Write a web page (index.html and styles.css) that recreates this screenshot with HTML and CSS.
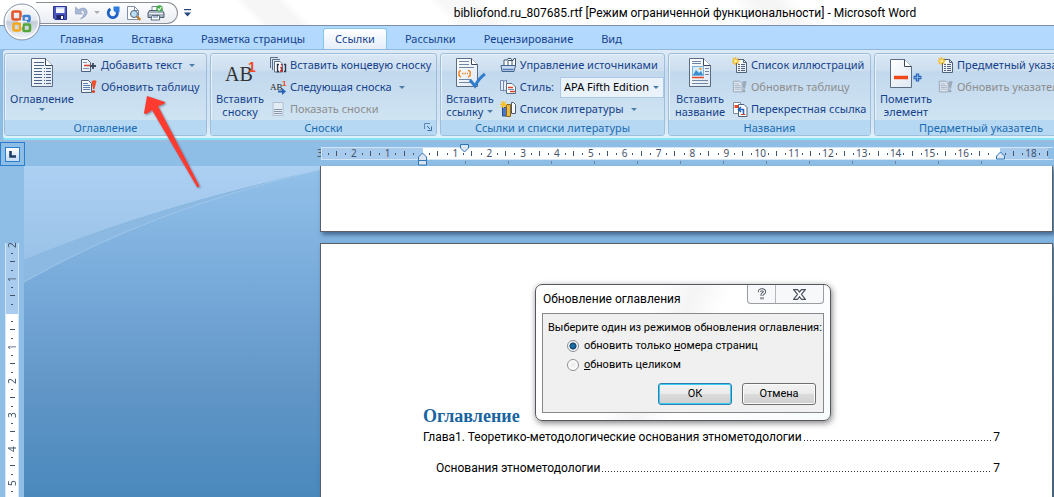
FILE: index.html
```html
<!DOCTYPE html>
<html lang="ru">
<head>
<meta charset="utf-8">
<title>bibliofond.ru_807685.rtf - Microsoft Word</title>
<link rel="stylesheet" href="styles.css">
</head>
<body>
<svg class="defs" aria-hidden="true">
  <defs>
    <linearGradient id="orb" x1="0" y1="0" x2="0" y2="1"><stop offset="0" stop-color="#fff"/><stop offset=".45" stop-color="#e3e7ee"/><stop offset=".5" stop-color="#c3cbd8"/><stop offset="1" stop-color="#f6f9fd"/></linearGradient>
    <linearGradient id="paper" x1="0" y1="0" x2="1" y2="1"><stop offset="0" stop-color="#fff"/><stop offset="1" stop-color="#dfe8f4"/></linearGradient>
    <linearGradient id="haze" x1="0" y1="0" x2="0" y2="1"><stop offset="0" stop-color="#acd0f2"/><stop offset="1" stop-color="#9ac2e8"/></linearGradient>
    <symbol id="i-update" viewBox="0 0 18 16"><path d="M1.500 1.500H8.500L11.500 4.500V13.500H1.500Z" fill="url(#paper)" stroke="#51647c"/><path d="M3 4.500h5M3 6.500h7M3 8.500h7M3 10.500h7" stroke="#5b80b4"/><path d="M11.500 2.500Q14 .5 16.500 2L14.500 10H13Z" fill="#f0502a"/><circle cx="13.500" cy="12.500" r="1.600" fill="#e0401c"/></symbol>
    <symbol id="i-update-off" viewBox="0 0 18 16"><path d="M1.500 1.500H8.500L11.500 4.500V13.500H1.500Z" fill="#dfe7f0" stroke="#93a0b0"/><path d="M3 4.500h5M3 6.500h7M3 8.500h7M3 10.500h7" stroke="#a3b2c6"/><path d="M11.500 2.500Q14 .5 16.500 2L14.500 10H13Z" fill="#9ba8b8"/><circle cx="13.500" cy="12.500" r="1.600" fill="#9ba8b8"/></symbol>
    <symbol id="i-newlist" viewBox="0 0 16 16"><path d="M4.500 2.500H11.500L14.500 5.500V15.500H4.500Z" fill="url(#paper)" stroke="#51647c"/><path d="M11.500 2.500V5.500H14.500" fill="none" stroke="#51647c"/><path d="M6 7.500h2M9 7.500h4M6 9.500h2M9 9.500h4M6 11.500h2M9 11.500h4M6 13.500h2M9 13.500h4" stroke="#50627a"/><path d="M3.500 0V8M0 4H7.500M.8 1.200L6.500 6.800M6.500 1.200L.8 6.800" stroke="#f5b92c" stroke-width="1.300"/><circle cx="3.600" cy="4" r="1.600" fill="#fff2a0"/></symbol>
  </defs>
</svg>
<div class="window">
  <header class="titlebar">
    <div class="quick">
      <button aria-label="Сохранить"><svg width="16" height="16" viewBox="0 0 16 16"><path d="M1.500 1.500H14.500V14.500H3L1.500 13Z" fill="#4a55c0" stroke="#2b3596"/><path d="M4 2H12.500V8H4Z" fill="#f3f6fd"/><path d="M4 2H12.500V3.500H4Z" fill="#b9c8ee"/><path d="M4.500 10H12V14H4.500Z" fill="#1f2766"/><path d="M9 11H11V14H9Z" fill="#fff"/></svg></button>
      <button aria-label="Отменить"><svg width="16" height="16" viewBox="0 0 16 16"><path d="M2.500 2V9H9.500L7 6.800Q9.500 4.500 11 6.200Q12.500 9.500 7.500 14Q15 11 14 6Q12.500 1 5.300 4.600Z" fill="#a9b9d6" stroke="#8b9dc0" stroke-width=".7"/></svg></button>
      <span class="caret caret-off"></span>
      <button aria-label="Повторить"><svg width="16" height="16" viewBox="0 0 16 16"><path d="M5.500 4A4.600 4.600 0 1 0 11.300 5" fill="none" stroke="#1f62c4" stroke-width="2.800"/><path d="M8.500 1.500H14.500V7.500L12.500 6L10.500 7.500L8.500 5.500Z" fill="#2f7ce0"/></svg></button>
      <button aria-label="Просмотр"><svg width="16" height="16" viewBox="0 0 16 16"><path d="M1.500 1.500H8.500L12.500 5.500V14.500H1.500Z" fill="#fff" stroke="#8090a8"/><path d="M8.500 1.500V5.500H12.500" fill="none" stroke="#8090a8"/><circle cx="8" cy="9" r="3.500" fill="#b9ddf2" stroke="#4d6584"/><path d="M10.800 11.500L14.300 14.800" stroke="#c07a2c" stroke-width="2.400"/></svg></button>
      <button aria-label="Печать"><svg width="18" height="16" viewBox="0 0 18 16"><path d="M5 6V1.500H13V6" fill="#fff" stroke="#76879f"/><path d="M2.500 5.500H15.500L17 8V12.500H1V8Z" fill="#a7b2c0" stroke="#525f70"/><path d="M2 8.500H16" stroke="#e9eef4"/><path d="M5 10.500H12.500V15H4Z" fill="#fff" stroke="#5d6d82"/><path d="M6 12h5" stroke="#5077b0"/><circle cx="12.500" cy="3.500" r="3.300" fill="#3fae49"/><path d="M10.800 3.400L12.200 5L14.500 2" fill="none" stroke="#fff" stroke-width="1.200"/></svg></button>
    </div>
    <button class="quick-more" aria-label="Настройка панели"><svg width="7" height="8" viewBox="0 0 7 8"><path d="M0 .5H7" stroke="#25457f" stroke-width="1.400"/><path d="M0 3.500H7L3.500 7.500Z" fill="#25457f"/></svg></button>
    <h1 class="title">bibliofond.ru_807685.rtf [Режим ограниченной функциональности] - Microsoft Word</h1>
    <button class="orb" aria-label="Кнопка Office"><svg width="40" height="40" viewBox="0 0 40 40"><circle cx="20" cy="20" r="18" fill="url(#orb)" stroke="#8593aa"/><circle cx="20" cy="20" r="16.500" fill="none" stroke="#fff" stroke-width="1.200"/><g fill="none" stroke-width="2.600"><rect x="10.500" y="9.500" width="8" height="8" rx="1.500" stroke="#e4572a"/><rect x="21.500" y="14" width="6" height="5" rx="1" stroke="#3c7fd0"/><rect x="11.500" y="21.500" width="6.500" height="7" rx="1" stroke="#f2a81d"/><rect x="21.500" y="22.500" width="6.500" height="6.500" rx="1" stroke="#54a63a"/></g><path d="M16 19.500H25M19.800 15V25" stroke="#f4f6fa" stroke-width="1.400"/></svg></button>
  </header>

  <nav class="tabs">
    <a href="#">Главная</a><a href="#">Вставка</a><a href="#">Разметка страницы</a><a href="#" class="active" aria-current="page">Ссылки</a><a href="#">Рассылки</a><a href="#">Рецензирование</a><a href="#">Вид</a>
  </nav>

  <div class="ribbon">
    <section class="group group-toc">
      <div class="group-body">
        <button class="big"><svg width="24" height="32" viewBox="0 0 24 32"><path d="M1.500 1.500H15.500L22.500 8.500V29.500H1.500Z" fill="url(#paper)" stroke="#5b6c84"/><path d="M15.500 1.500V8.500H22.500" fill="#fff" stroke="#36465c"/><path d="M4 5.500h10M4 8.500h10M4 11.500h8M4 14.500h8M4 17.500h8M4 20.500h8M4 23.500h8M4 26.500h8M14 11.500h1M16 11.500h5M14 14.500h1M16 14.500h5M14 17.500h1M16 17.500h5M14 20.500h1M16 20.500h5M14 23.500h1M16 23.500h5M14 26.500h1M16 26.500h5" stroke="#4a6285"/></svg><span>Оглавление</span><span class="caret"></span></button>
        <div class="rows">
          <button class="row"><svg width="18" height="16" viewBox="0 0 18 16"><path d="M1.500 2.500H7.500L10.500 5.500V14.500H1.500Z" fill="url(#paper)" stroke="#51647c"/><path d="M3 5.500h4M3 11.500h6" stroke="#7c93b3"/><path d="M4 8.500h7" stroke="#d8452a" stroke-width="1.400"/><path d="M10 9h6M13 6v6" stroke="#3c4a5c" stroke-width="1.800"/></svg>Добавить текст<span class="caret"></span></button>
          <button class="row"><svg width="18" height="16"><use href="#i-update"/></svg>Обновить таблицу</button>
        </div>
      </div>
      <h2>Оглавление</h2>
    </section>

    <section class="group group-notes">
      <div class="group-body">
        <button class="big"><svg width="32" height="32" viewBox="0 0 32 32"><text x="1" y="24" class="ab">AB</text><text x="24" y="15" class="sup">1</text></svg><span>Вставить<br>сноску</span></button>
        <div class="rows">
          <button class="row"><svg width="17" height="16" viewBox="0 0 17 16"><path d="M.5 11V.5H8" fill="none" stroke="#5b6c84"/><path d="M2.500 13V2.500H10" fill="none" stroke="#5b6c84"/><path d="M4.500 4.500H10L12.500 7V15H4.500Z" fill="#fff" stroke="#5b6c84"/><path d="M9 7.500H7.500V14.500H9M14 7.500H15.500V14.500H14" fill="none" stroke="#28364a" stroke-width="1.400"/><path d="M11.500 7v1.600M10.300 10.500h1.200v3.500M10 14h3" fill="none" stroke="#c02424" stroke-width="1.400"/></svg>Вставить концевую сноску</button>
          <button class="row"><svg width="17" height="16" viewBox="0 0 17 16"><text x="0" y="11" class="ab-s">AB</text><text x="12" y="7" class="sup-s">1</text><path d="M8 11.500H12V9L16 12.500L12 16V13.500H8Z" fill="#2a62b4"/></svg>Следующая сноска<span class="caret"></span></button>
          <button class="row" disabled><svg width="17" height="16" viewBox="0 0 17 16"><path d="M3 1.500H13V14.500H3Z" fill="#e3ebf4" stroke="#b2c0d2"/><path d="M4 8.500h8M4 10.500h8M4 12.500h8" stroke="#8797ac"/></svg>Показать сноски</button>
        </div>
      </div>
      <h2>Сноски</h2>
      <button class="launcher" aria-label="Параметры сносок"><svg width="8" height="8" viewBox="0 0 8 8"><path d="M.5 6V.5H6" fill="none" stroke="#5c86b4"/><path d="M3 3L6 6M7.500 3.500V7.500H3.500" fill="none" stroke="#3c6ca0"/></svg></button>
    </section>

    <section class="group group-cite">
      <div class="group-body">
        <button class="big"><svg width="32" height="32" viewBox="0 0 32 32"><path d="M2.500 1.500H17.500L23.500 7.500V29.500H2.500Z" fill="url(#paper)" stroke="#5b6c84"/><path d="M17.500 1.500V7.500H23.500" fill="#fff" stroke="#36465c"/><path d="M5 4.500h10M5 7.500h10M5 10.500h15M5 22.500h12M5 25.500h12" stroke="#7088a8"/><path d="M7 13.500Q4.500 14 5 16.500Q4.500 19 7 20M14 13.500Q17 14 16 16.500Q17 19 14 20M8 16.500h1.500M10.500 16.500h1.500M13 16.500h1" fill="none" stroke="#f08a24" stroke-width="1.500"/><path d="M16 23L21 29Q25 21 31 17" fill="none" stroke="#2f7dcc" stroke-width="3"/></svg><span>Вставить<br>ссылку<i class="caret"></i></span></button>
        <div class="rows">
          <button class="row"><svg width="17" height="16" viewBox="0 0 17 16"><path d="M4 9V3H7L8 1.500H11L12 3V9M8 9V3.500H13L14 1.500H15.500V9" fill="#fff" stroke="#3f5672"/><path d="M1 8.500H15.500L14 14.500H2Z" fill="#c8daf0" stroke="#46658c"/><path d="M2.500 12.500H13.500" stroke="#4f7ab4" stroke-width="1.500"/></svg>Управление источниками</button>
          <div class="row"><svg width="17" height="16" viewBox="0 0 17 16"><path d="M.5 1.500H3.500V11.500H.5ZM3.500 2.500L6.500 1V11L3.500 12Z" fill="#e6eefa" stroke="#7288b0"/><path d="M6.500 4.500H12L15.500 8V14.500H6.500Z" fill="#fff" stroke="#5b6c84"/><path d="M8 8.500h5M10 12.500h5" stroke="#d8402a" stroke-width="1.400"/><path d="M8 10.500h6" stroke="#7c93b3"/></svg><label for="style">Стиль:</label><span class="combo"><select id="style"><option>APA Fifth Edition</option></select></span></div>
          <button class="row"><svg width="17" height="16" viewBox="0 0 17 16"><path d="M2.500 6.500H6.500V15H2.500Z" fill="#4b78c8" stroke="#2d4c86"/><path d="M6.500 3.500H10.500V15.500H6.500Z" fill="#edbb3e" stroke="#8a6420"/><path d="M11.500 1.500H13.500L15.500 3.500V12.500H11.500Z" fill="#f7f9fc" stroke="#4c5a70"/><path d="M3.500 0V7M0 3.500H7M1 1L6 6M6 1L1 6" stroke="#f7c02c" stroke-width="1.200"/></svg>Список литературы<span class="caret"></span></button>
        </div>
      </div>
      <h2>Ссылки и списки литературы</h2>
    </section>

    <section class="group group-captions">
      <div class="group-body">
        <button class="big"><svg width="24" height="32" viewBox="0 0 24 32"><path d="M1.500 1.500H15.500L22.500 8.500V29.500H1.500Z" fill="url(#paper)" stroke="#5b6c84"/><path d="M15.500 1.500V8.500H22.500" fill="#fff" stroke="#36465c"/><path d="M4 4.500h9M4 6.500h9M17 11.500h4M17 14.500h4M17 17.500h4M4 23.500h16M4 26.500h16" stroke="#7088a8"/><rect x="4.500" y="9.500" width="11" height="9" fill="#d4ecfb" stroke="#7fb2dc"/><path d="M5 18L8 13L11 16L13 14L15 18Z" fill="#3d8fd0"/><circle cx="12.500" cy="11.800" r="1.200" fill="#f5a030"/><path d="M4 20.500h12" stroke="#e0482a" stroke-width="1.500"/></svg><span>Вставить<br>название</span></button>
        <div class="rows">
          <button class="row"><svg width="16" height="16"><use href="#i-newlist"/></svg>Список иллюстраций</button>
          <button class="row" disabled><svg width="16" height="16"><use href="#i-update-off"/></svg>Обновить таблицу</button>
          <button class="row"><svg width="16" height="16" viewBox="0 0 16 16"><path d="M1.500 1.500H8.500V12.500H1.500Z" fill="#fff" stroke="#7c8ca4"/><path d="M2.500 5.500H6" stroke="#ef4a22" stroke-width="3"/><path d="M6.500 3.500H12L15 6.500V15.500H6.500Z" fill="#fff" stroke="#51647c"/><path d="M11.500 13V8.500H7M9 6L6.500 8.500L9 11" fill="none" stroke="#2563b8" stroke-width="1.600"/><path d="M9 13.500h4.500" stroke="#e0482a"/></svg>Перекрестная ссылка</button>
        </div>
      </div>
      <h2>Названия</h2>
    </section>

    <section class="group group-index">
      <div class="group-body">
        <button class="big"><svg width="34" height="32" viewBox="0 0 34 32"><path d="M1.500 2.500H15.500L22.500 9.500V30.500H1.500Z" fill="url(#paper)" stroke="#5b6c84"/><path d="M15.500 2.500V9.500H22.500" fill="#fff" stroke="#36465c"/><path d="M5 20.500H19" stroke="#f04818" stroke-width="3.600"/><path d="M24.500 20.500h8M28.500 16.500v8" stroke="#2c66b8" stroke-width="3.400"/><path d="M25.500 20.500h6M28.500 17.500v6" stroke="#7fb0ea"/></svg><span>Пометить<br>элемент</span></button>
        <div class="rows">
          <button class="row"><svg width="16" height="16"><use href="#i-newlist"/></svg>Предметный указатель</button>
          <button class="row" disabled><svg width="16" height="16"><use href="#i-update-off"/></svg>Обновить указатель</button>
        </div>
      </div>
      <h2>Предметный указатель</h2>
    </section>
  </div>

  <div class="ruler-row">
    <div class="corner"><button aria-label="Табуляция"><svg width="7" height="7" viewBox="0 0 7 7"><path d="M1.500 0V5.500H7" fill="none" stroke="#1c3e66" stroke-width="2.600"/></svg></button></div>
    <div class="ruler">
      <div class="scale"><b>3</b><b>2</b><b>1</b><b></b><b>1</b><b>2</b><b>3</b><b>4</b><b>5</b><b>6</b><b>7</b><b>8</b><b>9</b><b>10</b><b>11</b><b>12</b><b>13</b><b>14</b><b>15</b><b>16</b><b></b><b>18</b></div>
      <svg class="pin pin-left" width="10" height="14" viewBox="0 0 10 14"><path d="M.5 8.500V5L4.500 1L8.500 5V8.500ZM.5 8.500H8.500V13H.5Z" fill="#dbe6f2" stroke="#2f76b8"/></svg>
      <svg class="pin pin-first" width="10" height="10" viewBox="0 0 10 10"><path d="M.5 .5H8.500V4L4.500 8L.5 4Z" fill="#dbe6f2" stroke="#2f76b8"/></svg>
      <svg class="pin pin-right" width="10" height="9" viewBox="0 0 10 9"><path d="M.5 8V5L4.500 1L8.500 5V8Z" fill="#dbe6f2" stroke="#2f76b8"/></svg>
    </div>
  </div>

  <main class="workspace">
    <div class="vruler"><div class="vscale"><b>2</b><b>1</b><b></b><b>1</b><b>2</b><b>3</b><b>4</b><b>5</b></div></div>
    <div class="canvas">
      <svg class="swoosh" width="296" height="120" viewBox="0 0 296 120"><path d="M0 0H296V4Q130 40 0 94Z" fill="url(#haze)"/><path d="M0 94Q130 40 296 4Q130 42 0 116Z" fill="#8cb9e2"/><path d="M0 116Q130 42 296 4" fill="none" stroke="#9fc6ea"/></svg>
      <article class="sheet sheet-end"></article>
      <article class="sheet sheet-next">
        <h2>Оглавление</h2>
        <p class="entry"><span>Глава1. Теоретико-методологические основания этнометодологии</span><span class="leader"></span><span>7</span></p>
        <p class="entry entry-sub"><span>Основания этнометодологии</span><span class="leader"></span><span>7</span></p>
      </article>
    </div>
  </main>

  <form class="dialog" role="dialog" aria-labelledby="dlg-title">
    <div class="dialog-head">
      <h2 id="dlg-title">Обновление оглавления</h2>
      <div class="dialog-ctl">
        <button type="button" aria-label="Справка"><svg width="10" height="12" viewBox="0 0 10 12"><path d="M2.500 4Q2.300 1.800 5 1.800Q7.500 1.800 7.500 3.800Q7.500 5 5.800 5.800Q5 6.300 5 7.800M5 9.300V11.200" fill="none" stroke="#4b5260" stroke-width="3.200"/><path d="M2.500 4Q2.300 1.800 5 1.800Q7.500 1.800 7.500 3.800Q7.500 5 5.800 5.800Q5 6.300 5 7.400M5 9.600V10.800" fill="none" stroke="#fff" stroke-width="1.300"/></svg></button>
        <button type="button" class="close" aria-label="Закрыть"><svg width="13" height="11" viewBox="0 0 13 11"><path d="M.7 .7H4.500L6.500 3L8.500 .7H12.300L8.500 5.300L12.300 10.300H8.500L6.500 7.700L4.500 10.300H.7L4.500 5.300Z" fill="#fff" stroke="#4b5260" stroke-width="1.200"/></svg></button>
      </div>
    </div>
    <div class="dialog-body">
      <p>Выберите один из режимов обновления оглавления:</p>
      <label><input type="radio" name="mode" checked><span>обновить только <u>н</u>омера страниц</span></label>
      <label><input type="radio" name="mode"><span><u>о</u>бновить целиком</span></label>
      <div class="dialog-actions"><button type="button" class="default">ОК</button><button type="button">Отмена</button></div>
    </div>
  </form>

  <svg class="arrow" width="64" height="98" viewBox="0 0 64 98" aria-hidden="true"><path d="M7 3L25 9Q26 11 18 13L59 92Q60 95 57 94L12 17Q5 23 4 20Z" fill="#ff3b30"/></svg>
</div>
</body>
</html>
```

FILE: styles.css
```css
* { box-sizing: border-box; }
body { margin: 0; font: 11px/14px "Noto Sans", "Open Sans", sans-serif; color: #000; }
button { font: inherit; color: inherit; background: none; border: 0; padding: 0; }
h1, h2, p { margin: 0; font-weight: 400; }
svg { display: block; flex: none; }
.defs { position: absolute; width: 0; height: 0; }
.window { position: relative; height: 100vh; display: flex; flex-direction: column; overflow: hidden; background: #8ebde6; }

.caret { display: inline-block; flex: none; border: 3px solid transparent; border-top-color: #4d7ca8; border-bottom: 0; }
.caret-off { border-top-color: #a8aeb8; }

/* Title bar */
.titlebar { position: relative; z-index: 2; flex: none; display: flex; align-items: center; height: 26px; padding: 0 5px 0 36px; border-bottom: 1px solid #7c8ea6; background: linear-gradient(45deg, #fff 0 24%, #f6f6f6 25% 28%, #fff 29% 42%, #f7f7f7 43% 46%, #fff 47% 70%, #f5f5f5 72% 74%, #fff 76%); }
.quick { flex: none; display: flex; align-items: center; gap: 5px; height: 22px; width: 142px; padding: 0 8px 0 16px; border: 1px solid #8b8f96; border-left: 0; border-radius: 0 11px 11px 0; background: linear-gradient(#fdfdfe, #e9edf3); }
.quick-more { margin-left: 6px; }
.title { flex: 1; padding-left: 130px; text-align: center; font: 12px/16px Roboto, sans-serif; white-space: nowrap; }
.orb { position: absolute; left: 2px; top: 2px; }

/* Tabs */
.tabs { flex: none; display: flex; height: 23px; padding: 2px 0 0 46px; background: #b3d9ff; color: #15428b; }
.tabs a { padding: 0 14px; color: inherit; text-decoration: none; line-height: 22px; white-space: nowrap; }
.tabs .active { margin: 0 4px; padding: 0 11px; border: 1px solid #8cc4ec; border-bottom: 0; border-radius: 3px 3px 0 0; background: linear-gradient(#fff, #e4eefa); line-height: 20px; box-shadow: 0 0 2px #8fe4fa; }

/* Ribbon */
.ribbon { flex: none; display: flex; gap: 3px; height: 91px; margin-left: 2px; padding: 3px 0 2px 1px; border: 1px solid #8db8e0; border-right: 0; border-bottom: 2px solid #86e3fa; border-radius: 4px 0 0 4px; background: linear-gradient(#dfeaf6, #c9dcef 25%, #d7e6f4 85%, #e0f3fd); color: #15428b; overflow: hidden; }
.group { position: relative; flex: none; display: flex; flex-direction: column; border: 1px solid #9ebfdc; border-radius: 3px; background: linear-gradient(#dae7f4, #cddff0 20%, #c2d8ed 22%, #d3e7f4); box-shadow: inset 1px 1px #e6f1fa; overflow: hidden; }
.group-toc { width: 203px; }
.group-notes { width: 227px; }
.group-cite { width: 225px; }
.group-captions { width: 203px; }
.group-index { width: 214px; }
.group-body { flex: 1; display: flex; gap: 1px; }
.group h2 { flex: none; height: 16px; font-size: 11px; line-height: 15px; text-align: center; color: #1a6cb2; background: #b7d8f2; }
.big { display: flex; flex-direction: column; align-items: center; justify-content: flex-start; gap: 3px; width: 58px; padding-top: 3px; line-height: 13px; }
.group-toc .big { width: 74px; }
.group-captions .big, .group-index .big { width: 62px; }
.big i { margin: 0 0 3px 4px; }
.rows { display: grid; grid-template-rows: repeat(3, 22px); justify-items: start; }
.row { display: flex; align-items: center; gap: 3px; white-space: nowrap; }
.row .caret { margin-left: 4px; }
.row:disabled { color: #8d8d8d; }
.ab { font: 20px "Liberation Serif", serif; fill: #333; }
.sup { font: bold 14px "Liberation Sans", sans-serif; fill: #f04a20; }
.ab-s { font: 9px "Liberation Serif", serif; fill: #222; }
.sup-s { font: bold 8px "Liberation Sans", sans-serif; fill: #f04a20; }
.combo { position: relative; display: flex; margin-left: 3px; }
.combo select { width: 104px; height: 21px; padding: 0 0 0 3px; appearance: none; border: 1px solid #abc8e6; border-radius: 0; background: #eaf3fc; font: inherit; color: #000; }
.combo::after { content: ""; position: absolute; right: 5px; top: 9px; border: 3px solid transparent; border-top-color: #4d7ca8; border-bottom: 0; }
.launcher { position: absolute; right: 4px; bottom: 4px; }

/* Rulers */
.ruler-row { flex: none; display: flex; height: 26px; border-top: 2px solid #9dbbdc; }
.corner { display: flex; align-items: center; justify-content: center; width: 25px; border: 1px solid #2a7fd0; }
.corner button { display: grid; place-items: center; width: 15px; height: 15px; border: 1px solid #2a7fd0; background: linear-gradient(#fff, #c7dcf2); }
.ruler { position: relative; flex: 1; margin: 5px 1px 0 296px; height: 19px; }
.ruler::before { content: ""; position: absolute; left: 144px; top: 14px; width: 517px; height: 3px; background: linear-gradient(90deg, #6f86a0 1px, transparent 1px) 0 0 / 43px 3px; }
.ruler::after { content: ""; position: absolute; inset: 0 0 6px; border: 1px solid #d3e6f8; border-right: 0; }
.scale { display: grid; grid-template-columns: repeat(22, 1fr); width: 745px; height: 13px; margin-left: -18px; background: linear-gradient(90deg, transparent 18px, #a8cbee 18px 120px, #fff 120px 697px, #a8cbee 697px); }
.scale b, .vscale b { font: 10px/13px "Noto Sans", sans-serif; color: #43546a; text-align: center; }
.scale b { background: linear-gradient(#43546a, #43546a) 25% 6px / 1px 2px no-repeat, linear-gradient(#43546a, #43546a) 75% 6px / 1px 2px no-repeat, linear-gradient(#43546a, #43546a) 100% 4px / 1px 5px no-repeat; }
.scale b:first-child { background-position: -9px 6px, 75% 6px, 100% 4px; }
.pin { position: absolute; z-index: 1; }
.pin-left { left: 97px; top: 5px; }
.pin-first { left: 139px; top: -3px; }
.pin-right { left: 675px; top: 4px; }

.workspace { flex: 1; display: flex; min-height: 0; }
.vruler { width: 24px; padding: 77px 5px 0; overflow: hidden; }
.vscale { display: grid; grid-auto-rows: 34px; width: 14px; margin-top: -15px; background: linear-gradient(#d3e6f8, #d3e6f8) 0 15px / 1px 100% no-repeat, linear-gradient(#d3e6f8, #d3e6f8) 13px 15px / 1px 100% no-repeat, linear-gradient(transparent 15px, #a8cbee 15px 86px, #fff 86px); }
.vscale b { writing-mode: vertical-rl; transform: rotate(180deg); line-height: 14px; background: linear-gradient(#43546a, #43546a) 6px 25% / 2px 1px no-repeat, linear-gradient(#43546a, #43546a) 6px 75% / 2px 1px no-repeat, linear-gradient(#43546a, #43546a) 4px 0 / 5px 1px no-repeat; }
.vscale b:first-child { background-position: 6px 25%, 6px 50px, 4px 0; }

.canvas { position: relative; flex: 1; display: flex; flex-direction: column; gap: 11px; padding: 0 1px 0 296px; background: linear-gradient(#92c1ea, #7aacdb 33%, #6297c8 66%, #4a88bc); }
.swoosh { position: absolute; left: 0; top: 0; }
.sheet { position: relative; background: #fff; border: 1px solid #5c6066; box-shadow: 2px 3px 4px rgba(30, 60, 95, .6); }
.sheet-end { flex: none; height: 66px; border-top: 0; }
.sheet-next { flex: 1; padding: 161px 52px 0 102px; border-bottom: 0; }
.sheet-next h2 { font: bold 18px/22px "Liberation Serif", serif; color: #17649f; }
.entry { display: flex; font: 12px/16px Roboto, sans-serif; padding-top: 2px; white-space: nowrap; }
.entry-sub { padding: 15px 0 0 13px; }
.leader { flex: 1; margin: 0 1px 4px 2px; background: repeating-linear-gradient(90deg, #333 0 1px, transparent 1px 3px) left bottom / 100% 1px no-repeat; }

/* Dialog */
.dialog { position: absolute; left: 535px; top: 284px; width: 296px; padding: 0 6px 7px; border: 1px solid #55585e; border-radius: 7px; background: linear-gradient(115deg, #fff 35%, #f4f4f4 45%, #fff 55%, #f8fbfc); box-shadow: 1px 2px 6px rgba(0, 0, 0, .5); font: 11px/14px Roboto, sans-serif; }
.dialog-head { display: flex; align-items: flex-start; justify-content: space-between; height: 28px; }
.dialog-head h2 { padding: 6px 0 0 1px; font-size: 12px; line-height: 16px; white-space: nowrap; }
.dialog-ctl { display: flex; height: 19px; border: 1px solid #9a9da3; border-top: 0; border-radius: 0 0 4px 4px; background: #f7f8f9; }
.dialog-ctl button { display: grid; place-items: center; width: 27px; }
.dialog-ctl .close { width: 48px; border-left: 1px solid #b3b6bb; }
.dialog-body { padding: 6px 7px 7px 5px; border: 1px solid #85888d; background: #f0f0f0; white-space: nowrap; }
.dialog-body p { line-height: 16px; }
.dialog-body label { display: flex; align-items: center; gap: 5px; height: 19px; padding-left: 19px; }
.dialog-body input { appearance: none; width: 12px; height: 12px; margin: 0; border: 1px solid #8b8f94; border-radius: 50%; background: radial-gradient(#e8e8e8, #fff 70%); }
.dialog-body input:checked { background: radial-gradient(#1d6fa8 0 20%, #123f68 45%, #f4f6f8 55%); }
.dialog-actions { display: flex; justify-content: flex-end; gap: 10px; padding-top: 9px; }
.dialog-actions button { width: 74px; height: 22px; border: 1px solid #707070; border-radius: 3px; background: linear-gradient(#f3f3f3, #ebebeb 48%, #dcdcdc 50%, #cfcfcf); box-shadow: inset 0 0 0 1px #fbfbfb; }
.dialog-actions .default { border-color: #2c7fae; box-shadow: inset 0 0 0 1px #38cdf5; }

/* Callout arrow */
.arrow { position: absolute; z-index: 3; left: 140px; top: 93px; filter: drop-shadow(1px 1px 1px rgba(60, 90, 120, .6)); }
```
